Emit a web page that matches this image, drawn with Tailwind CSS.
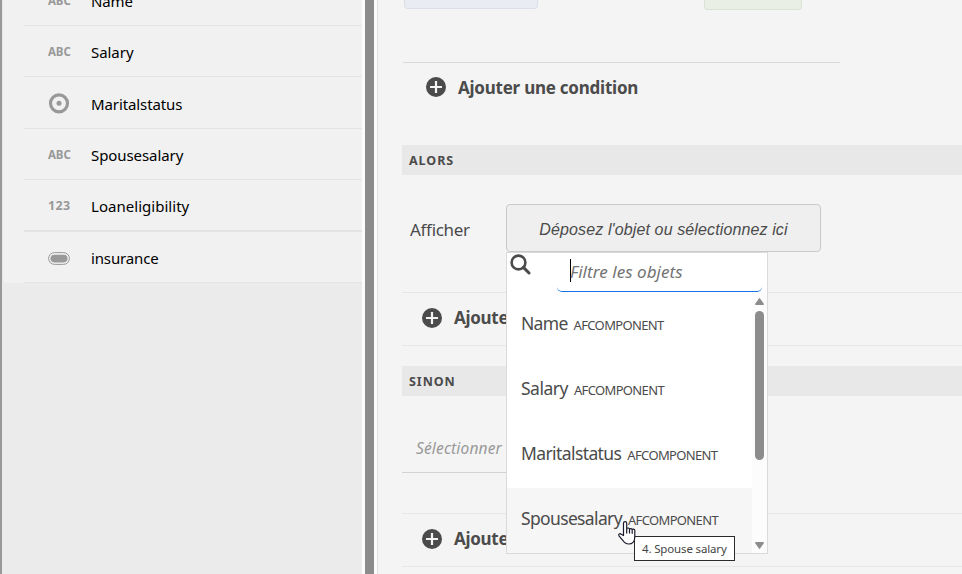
<!DOCTYPE html>
<html lang="fr">
<head>
<meta charset="utf-8">
<title>Éditeur de règles</title>
<script src="https://cdn.jsdelivr.net/npm/@tailwindcss/browser@4"></script>
</head>
<body class="w-[962px] h-[574px] overflow-hidden bg-[#f4f4f4] font-['Noto_Sans','Open_Sans',sans-serif] text-[#4b4b4b]">
<svg class="hidden">
  <symbol id="plus" viewBox="0 0 20 20"><circle cx="10" cy="10" r="10" fill="#4b4b4b"/><path d="M10 4v12M4 10h12" stroke="#f4f4f4" stroke-width="2.2"/></symbol>
</svg>
<div class="flex h-[574px] whitespace-nowrap">
  <aside class="flex h-full w-[362px] shrink-0 flex-col border-l-2 border-[#999] bg-[#ebebeb] text-[15px] text-black">
    <ul class="flex h-[283px] flex-col border-l border-[#e6e6e6] bg-[#f1f1f1] pl-[21px]">
      <li class="flex h-[26px] items-end border-b border-[#e4e4e4] pl-6"><span class="w-[43px] pb-[17px] text-[11.5px] leading-[14px] font-bold tracking-[-0.1px] text-[#999]">ABC</span><span class="pb-[14px] text-[15px] leading-5 tracking-[-0.1px]">Name</span></li>
      <li class="flex h-[51px] items-center border-b border-[#e4e4e4] pl-6"><span class="w-[43px] pt-[2px] text-[11.5px] font-bold tracking-[-0.1px] text-[#999]">ABC</span><span class="pt-[3px] tracking-[-0.05px]">Salary</span></li>
      <li class="flex h-[52px] items-center border-b border-[#e4e4e4] pl-6"><span class="w-[43px]"><svg class="size-[22px]" viewBox="0 0 22 22"><circle cx="11" cy="11.3" r="8.5" fill="none" stroke="#999" stroke-width="3.2"/><circle cx="11" cy="11.3" r="2.5" fill="#999"/></svg></span><span class="pt-[3px] tracking-[-0.1px]">Maritalstatus</span></li>
      <li class="flex h-[51px] items-center border-b border-[#e4e4e4] pl-6"><span class="w-[43px] pt-px text-[11.5px] font-bold tracking-[-0.1px] text-[#999]">ABC</span><span class="pt-[2px] tracking-[-0.08px]">Spousesalary</span></li>
      <li class="flex h-[52px] items-center border-b-2 border-[#e4e4e4] pl-6"><span class="w-[43px] pt-[2px] text-[12.5px] font-bold tracking-[0.3px] text-[#999]">123</span><span class="pt-[3px] tracking-[0.03px]">Loaneligibility</span></li>
      <li class="flex h-[51px] items-center border-b border-[#e4e4e4] pl-6"><span class="w-[43px] pt-[2px]"><svg class="h-[13px] w-[22px]" viewBox="0 0 22 13"><rect x=".6" y=".6" width="20.8" height="11.8" rx="5.9" fill="none" stroke="#999"/><rect x="2.5" y="2.8" width="17" height="7.6" rx="3.8" fill="#999"/></svg></span><span class="pt-[3px] tracking-[-0.15px]">insurance</span></li>
    </ul>
  </aside>
  <div class="h-full w-[15px] shrink-0 border-x-[3px] border-[#fcfcfc] bg-[#8c8c8c]"></div>
  <main class="relative h-full flex-1 border-l border-[#e2e2e2]">
    <div class="flex h-[62px] items-start pl-[26px]">
      <div class="h-[9px] w-[134px] rounded-b-[4px] border border-t-0 border-[#dbe0e8] bg-[#e9edf3]"></div>
      <div class="ml-[166px] h-[10px] w-[98px] rounded-b-[4px] border border-t-0 border-[#d9e2d5] bg-[#e9efe4]"></div>
    </div>
    <div class="ml-[25px] w-[437px] border-t border-[#d9d9d9]"></div>
    <div class="flex h-[82px] items-start pt-[13px] pl-12">
      <svg class="mt-[1px] size-5"><use href="#plus"/></svg>
      <span class="ml-3 text-[17px] leading-6 font-bold tracking-[-0.24px]">Ajouter une condition</span>
    </div>
    <h2 class="ml-6 flex h-[30px] items-center bg-[#e8e8e8] pt-[2px] pl-[7px] text-[12.5px] font-bold tracking-[0.95px]">ALORS</h2>
    <div class="ml-6 flex h-[118px] items-start border-b border-[#e6e6e6] pt-[29px] pl-2">
      <span class="w-[96px] pt-px text-[17px] leading-[50px] tracking-[-0.3px]">Afficher</span>
      <button class="h-[48px] w-[315px] rounded-[4px] border border-[#c9c9c9] bg-[#efefef] pt-[3px] font-['Liberation_Sans',sans-serif] text-[16px] tracking-[0.12px] italic">Déposez l'objet ou sélectionnez ici</button>
    </div>
    <div class="ml-6 flex h-[53px] items-center border-b border-[#e6e6e6] pb-[2px] pl-5">
      <svg class="size-5"><use href="#plus"/></svg>
      <span class="ml-3 text-[17px] font-bold tracking-[-0.3px]">Ajouter</span>
    </div>
    <h2 class="mt-5 ml-6 flex h-[30px] items-center bg-[#e8e8e8] pt-[2px] pl-[7px] text-[12.5px] font-bold tracking-[0.95px]">SINON</h2>
    <div class="ml-6 h-[118px] border-b border-[#e6e6e6] pt-[27px]">
      <div class="flex h-[50px] w-[240px] items-center border-b border-[#d3d3d3] pt-[2px] pl-[14px] text-[15.5px] tracking-[0.15px] text-[#999] italic">Sélectionner</div>
    </div>
    <div class="ml-6 flex h-[53px] items-center border-b border-[#e6e6e6] pb-[2px] pl-5">
      <svg class="size-5"><use href="#plus"/></svg>
      <span class="ml-3 text-[17px] font-bold tracking-[-0.3px]">Ajouter</span>
    </div>
    <div class="absolute top-[252px] left-[128px] flex h-[302px] w-[262px] flex-col border border-[#dadada] bg-white">
      <div class="flex h-10 pl-[3px]">
        <svg class="mt-[1px] size-[21px] shrink-0" viewBox="0 0 21 21"><circle cx="8.5" cy="8.5" r="6.9" fill="none" stroke="#4b4b4b" stroke-width="2.6"/><path d="M13.4 13.4L19 19" stroke="#4b4b4b" stroke-width="3" stroke-linecap="round"/></svg>
        <div class="ml-[26px] flex h-[39px] w-[205px] items-center rounded-b-[5px] border-b border-[#1473e6] pl-[13px]">
          <span class="-mt-1 h-[23px] w-px bg-black"></span><span class="-ml-px text-[17px] tracking-[0.05px] text-[#747474] italic">Filtre les objets</span>
        </div>
      </div>
      <div class="flex h-[260px]">
        <ul class="w-[245px]">
          <li class="flex h-[65px] items-baseline pt-[17px] pl-[14px]"><span class="text-[17.5px] tracking-[-0.7px]">Name</span><span class="ml-[6px] text-[13px] tracking-[-0.65px]">AFCOMPONENT</span></li>
          <li class="flex h-[65px] items-baseline pt-[17px] pl-[14px]"><span class="text-[17.5px] tracking-[-0.5px]">Salary</span><span class="ml-[6px] text-[13px] tracking-[-0.65px]">AFCOMPONENT</span></li>
          <li class="flex h-[65px] items-baseline pt-[17px] pl-[14px]"><span class="text-[17.5px] tracking-[-0.6px]">Maritalstatus</span><span class="ml-[6px] text-[13px] tracking-[-0.65px]">AFCOMPONENT</span></li>
          <li class="flex h-[65px] items-baseline bg-[#f6f6f6] pt-[17px] pl-[14px]"><span class="text-[17.5px] tracking-[-0.65px]">Spousesalary</span><span class="ml-[6px] text-[13px] tracking-[-0.65px]">AFCOMPONENT</span></li>
        </ul>
        <div class="flex w-[15px] flex-col items-center bg-[#fcfcfc] pt-[5px]">
          <svg class="h-[7px] w-[9px]" viewBox="0 0 9 7"><path d="M4.5 .8L8.2 6.2H.8Z" fill="#8c8c8c" stroke="#8c8c8c" stroke-width="1.4" stroke-linejoin="round"/></svg>
          <div class="mt-[6px] h-[149px] w-[9px] rounded-full bg-[#8c8c8c]"></div>
          <svg class="mt-[82px] h-[7px] w-[9px]" viewBox="0 0 9 7"><path d="M4.5 6.2L8.2 .8H.8Z" fill="#8c8c8c" stroke="#8c8c8c" stroke-width="1.4" stroke-linejoin="round"/></svg>
        </div>
      </div>
    </div>
    <div class="absolute top-[536px] left-[256px] flex h-[25px] w-[101px] items-center border border-[#2b2b2b] bg-white pl-[7px] text-[11.5px] tracking-[-0.15px] text-[#444]">4. Spouse salary</div>
    <svg class="absolute top-[521px] left-[240px] h-[24px] w-[18px]" viewBox="0 0 18 24"><path d="M5.5 14.5V2.2a1.6 1.6 0 0 1 3.2 0V8c0-1.5 2.8-1.3 2.8.4 0-1.3 2.7-1.1 2.7.5 0-1.2 2.6-1 2.6.7V16c0 4-2.3 7-6 7-3 0-4.6-1.3-6-3.7L1 14.8c-.9-1.6.9-2.8 2.2-1.6Z" fill="#fff" stroke="#1a1a2b" stroke-width="1.2" stroke-linejoin="round"/><path d="M8.7 8v4.5M11.5 8.6v4M14.2 9.2v3.5" stroke="#1a1a2b" stroke-width="1.2"/></svg>
  </main>
</div>
</body>
</html>
